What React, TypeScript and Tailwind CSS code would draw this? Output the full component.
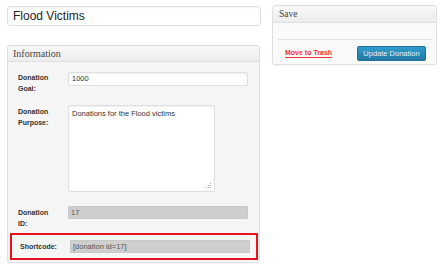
import React from "react";

const sans = { fontFamily: '"Liberation Sans", Arial, sans-serif' };
const serif = { fontFamily: '"Liberation Serif", "Times New Roman", serif' };

function Label({ lines }: { lines: string[] }) {
  return (
    <div className="w-[50px] shrink-0 text-[7px] font-bold leading-[11px] text-[#333]" style={sans}>
      {lines.map((l, i) => (
        <div key={i}>{l}</div>
      ))}
    </div>
  );
}

export default function App() {
  return (
    <div className="w-[444px] h-[271px] bg-white flex pl-[7px] pt-[5px] gap-[11px] overflow-hidden" style={sans}>
      {/* Left column */}
      <div className="w-[254px] flex flex-col">
        <div className="mt-[1px] h-[20px] w-[254px] rounded-[3px] border border-[#dfdfdf] bg-white flex items-center pl-[5px] text-[12px] text-[#222] shadow-[inset_0_1px_2px_rgba(0,0,0,0.05)]">
          Flood Victims
        </div>

        <div className="mt-[19px] w-[253px] h-[218px] rounded-[3px] border border-[#dfdfdf] bg-[#f5f5f5] flex flex-col shadow-[0_1px_0_rgba(0,0,0,0.03)]">
          <div className="h-[16px] border-b border-[#dfdfdf] bg-gradient-to-b from-[#f8f8f8] to-[#ececec] flex items-center pl-[5px] text-[10px] text-[#464646] rounded-t-[3px]" style={serif}>
            Information
          </div>

          <div className="flex flex-col pt-[10px]">
            {/* Row 1 */}
            <div className="flex pl-[10px]">
              <Label lines={["Donation", "Goal:"]} />
              <div className="h-[14px] w-[180px] rounded-[2px] border border-[#dfdfdf] bg-white flex items-center pl-[3px] text-[7.5px] text-[#333] shadow-[inset_0_1px_2px_rgba(0,0,0,0.07)]">
                1000
              </div>
            </div>

            {/* Row 2 */}
            <div className="flex pl-[10px] mt-[11px]">
              <div className="pt-[1px]">
                <Label lines={["Donation", "Purpose:"]} />
              </div>
              <div className="relative h-[87px] w-[147px] rounded-[2px] border border-[#dfdfdf] bg-white pl-[3px] pt-[3px] text-[7.5px] leading-[9px] text-[#333] shadow-[inset_0_1px_2px_rgba(0,0,0,0.07)]">
                Donations for the Flood victims
                <svg className="absolute right-[2px] bottom-[2px]" width="6" height="6" viewBox="0 0 6 6">
                  <rect x="4" y="0" width="1" height="1" fill="#aaa" />
                  <rect x="2" y="2" width="1" height="1" fill="#aaa" />
                  <rect x="4" y="2" width="1" height="1" fill="#aaa" />
                  <rect x="0" y="4" width="1" height="1" fill="#aaa" />
                  <rect x="2" y="4" width="1" height="1" fill="#aaa" />
                  <rect x="4" y="4" width="1" height="1" fill="#aaa" />
                </svg>
              </div>
            </div>

            {/* Row 3 */}
            <div className="flex pl-[10px] mt-[14px]">
              <div className="pt-[1px]">
                <Label lines={["Donation", "ID:"]} />
              </div>
              <div className="h-[13px] w-[180px] rounded-[1px] bg-[#cecece] border border-[#c8c8c8] flex items-center pl-[2px] text-[7.5px] text-[#555]">
                17
              </div>
            </div>

            {/* Row 4 - highlighted */}
            <div className="mt-[4px] ml-[2px] w-[248px] h-[27px] border-2 border-[#e8121c] flex items-center pl-[8px]">
              <Label lines={["Shortcode:"]} />
              <div className="h-[13px] w-[180px] rounded-[1px] bg-[#cecece] border border-[#c8c8c8] flex items-center pl-[2px] text-[7.5px] text-[#555]">
                [donation id=17]
              </div>
            </div>
          </div>
        </div>
      </div>

      {/* Right column */}
      <div className="w-[165px] flex flex-col">
        <div className="h-[60px] rounded-[3px] border border-[#dfdfdf] bg-[#fafafa] flex flex-col shadow-[0_1px_0_rgba(0,0,0,0.03)]">
          <div className="h-[17px] border-b border-[#dfdfdf] bg-gradient-to-b from-[#f8f8f8] to-[#ececec] flex items-center pl-[6px] text-[9.5px] text-[#464646] rounded-t-[3px]" style={serif}>
            Save
          </div>
          <div className="mt-[16px] ml-[5px] mr-[3px] border-b border-[#e2e2e2]" />
          <div className="mt-[6px] flex items-center justify-between pl-[12px] pr-[10px]">
            <span className="text-[7px] font-bold text-[#f03030] underline decoration-[#f03030] underline-offset-[2px]">
              Move to Trash
            </span>
            <div className="h-[15px] w-[69px] rounded-[2px] border border-[#1f6f96] bg-gradient-to-b from-[#2f9ccd] to-[#2278a3] flex items-center justify-center text-[7.5px] text-[#e4f1f8]">
              Update Donation
            </div>
          </div>
        </div>
      </div>
    </div>
  );
}
